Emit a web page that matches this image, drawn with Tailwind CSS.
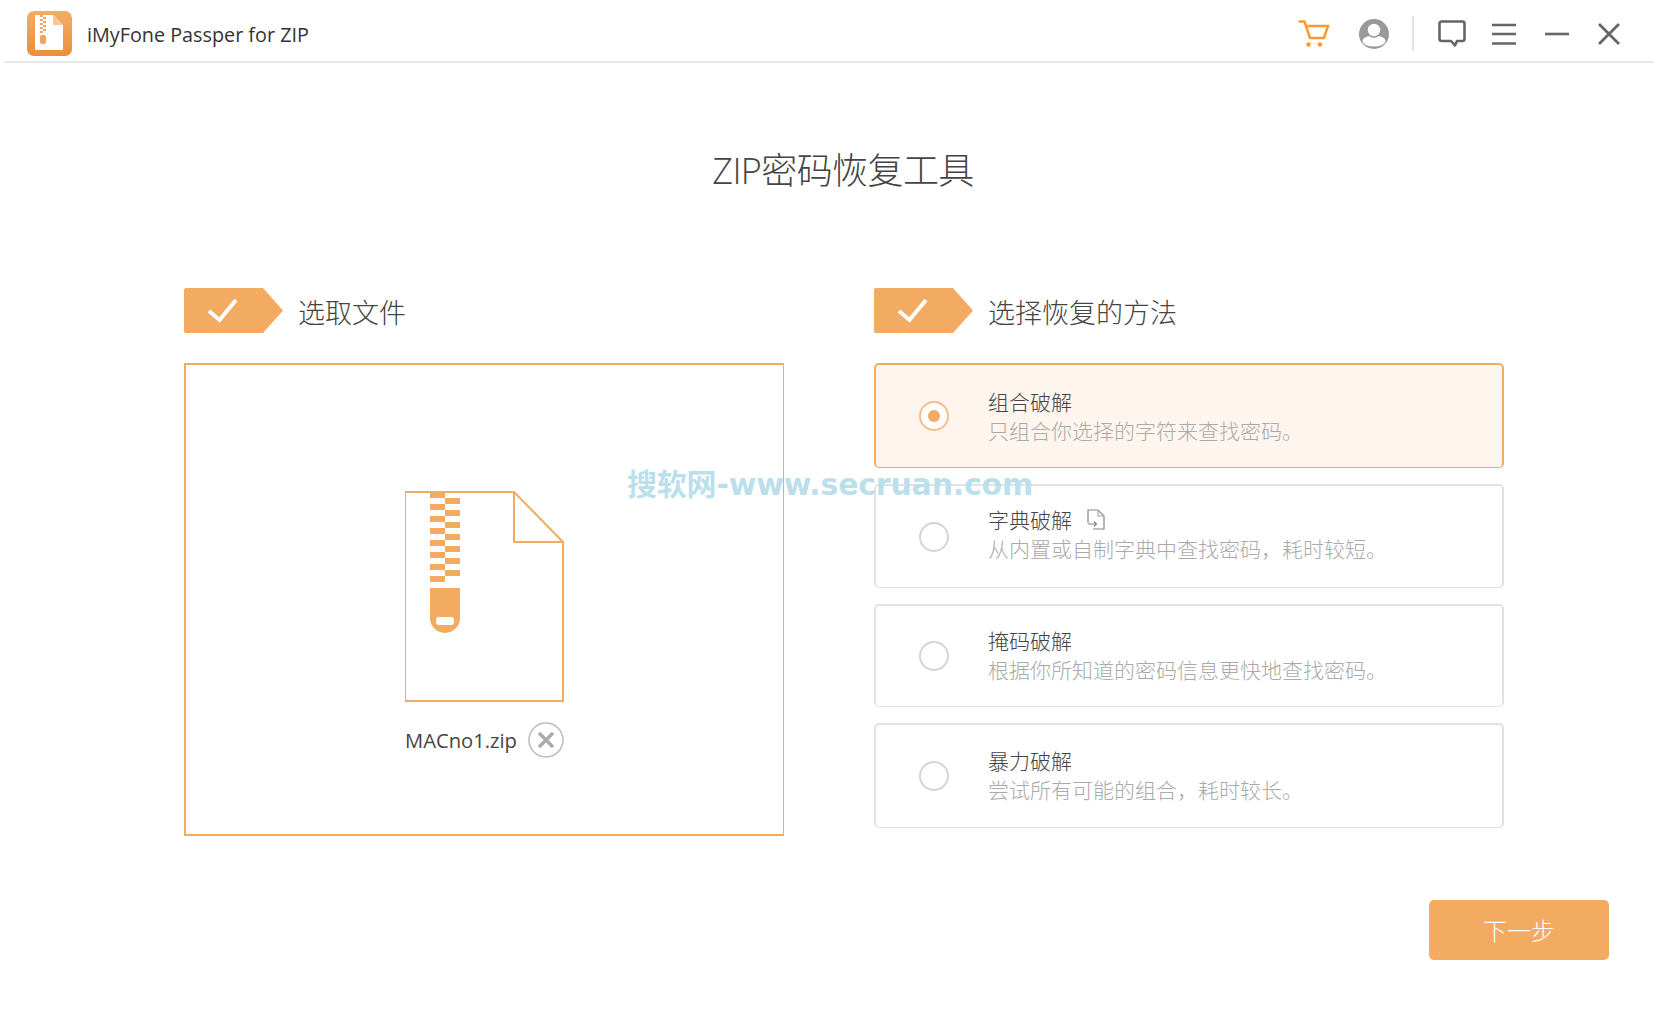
<!DOCTYPE html>
<html lang="zh-CN">
<head>
  <meta charset="UTF-8">
  <title>iMyFone Passper for ZIP</title>
  <script src="https://cdn.jsdelivr.net/npm/@tailwindcss/browser@4"></script>
</head>
<body class="bg-white">
  <div class="relative w-[1658px] h-[1015px] overflow-hidden bg-white text-[#333] font-['Open_Sans','Noto_Sans_CJK_SC',sans-serif]">

    <!-- title bar -->
    <header class="mx-[4px] h-[63px] border-b-2 border-[#e8e8e8] flex items-center pl-[23px] pt-[6px]">
      <svg class="w-[45px] h-[45px] shrink-0" viewBox="0 0 45 45">
        <defs>
          <linearGradient id="logoBg" x1="0" y1="0" x2="0" y2="1">
            <stop offset="0" stop-color="#f2ad68"/>
            <stop offset="1" stop-color="#e98f3c"/>
          </linearGradient>
        </defs>
        <rect width="45" height="45" rx="7" fill="url(#logoBg)"/>
        <path d="M8 4H26L36 14V39H8Z" fill="#fff"/>
        <path d="M26 4V14H36Z" fill="#f6c798"/>
        <path d="M13 4h3v2h-3zM16 6h3v2h-3zM13 8h3v2h-3zM16 10h3v2h-3zM13 12h3v2h-3zM16 14h3v2h-3zM13 16h3v2h-3zM16 18h3v2h-3zM13 20h3v2h-3z" fill="#eea55f"/>
        <rect x="13" y="24" width="6" height="9" rx="2" fill="#eea55f"/>
      </svg>
      <span class="ml-[15px] pt-[2px] text-[19.8px] text-[#333]">iMyFone Passper for ZIP</span>

      <div class="ml-auto flex items-center h-full">
        <svg class="w-[32px] h-[30px]" viewBox="0 0 32 30" fill="none" stroke="#ff9a2e" stroke-width="2.5">
          <path d="M0.5 2.5H6.5L12 19H26L30 7H8.5"/>
          <circle cx="10.5" cy="25.5" r="2.2" fill="#ff9a2e" stroke="none"/>
          <circle cx="22" cy="25.5" r="2.2" fill="#ff9a2e" stroke="none"/>
        </svg>
        <svg class="ml-[29px] w-[30px] h-[30px]" viewBox="0 0 30 30">
          <circle cx="15" cy="15" r="15" fill="#999"/>
          <ellipse cx="15" cy="22" rx="11.5" ry="5.5" fill="#fff"/>
          <circle cx="15" cy="11" r="7" fill="#fff" stroke="#999" stroke-width="1.5"/>
        </svg>
        <div class="ml-[23px] w-[2px] h-[35px] bg-[#e2e2e2]"></div>
        <svg class="ml-[24px] w-[28px] h-[28px]" viewBox="0 0 28 28" fill="none" stroke="#666" stroke-width="2.6" stroke-linejoin="round">
          <path d="M3.5 1.5H24.5A2 2 0 0 1 26.5 3.5V19A2 2 0 0 1 24.5 21H19L17 25.5L13 21H3.5A2 2 0 0 1 1.5 19V3.5A2 2 0 0 1 3.5 1.5Z"/>
        </svg>
        <svg class="ml-[26px] w-[24px] h-[22px]" viewBox="0 0 24 22" stroke="#666" stroke-width="2.6">
          <path d="M0 2H24M0 11H24M0 20.5H24"/>
        </svg>
        <svg class="ml-[29px] w-[24px] h-[4px]" viewBox="0 0 24 4" stroke="#666" stroke-width="2.6">
          <path d="M0 2H24"/>
        </svg>
        <svg class="ml-[29px] mr-[34px] w-[22px] h-[22px]" viewBox="0 0 22 22" stroke="#666" stroke-width="2.8">
          <path d="M1 1L21 21M21 1L1 21"/>
        </svg>
      </div>
    </header>

    <h1 class="mt-[81px] pl-[28px] text-center text-[36px] leading-[54px] font-light tracking-[-0.6px] text-[#444]">ZIP密码恢复工具</h1>

    <main class="mt-[90px] ml-[184px] flex gap-[90px]">
      <!-- step 1 -->
      <section class="w-[600px]">
        <div class="flex items-center h-[45px] gap-[15px]">
          <svg class="w-[99px] h-[45px]" viewBox="0 0 99 45">
            <path d="M2 0H79L99 22.5L79 45H2A2 2 0 0 1 0 43V2A2 2 0 0 1 2 0Z" fill="#f3ab62"/>
            <path d="M25 23L35.5 32L52 12" fill="none" stroke="#fff" stroke-width="4"/>
          </svg>
          <span class="pt-[6px] text-[27px] font-light text-[#444]">选取文件</span>
        </div>

        <div class="mt-[30px] h-[473px] border-2 border-r border-[#f3ab62] flex flex-col items-center pt-[126px]">
          <svg class="w-[159px] h-[211px]" viewBox="1 0 159 211">
            <path d="M1 1H110L159 51V210H1Z" fill="#fff" stroke="#f3ab62" stroke-width="2"/>
            <path d="M110 1V51H159" fill="none" stroke="#f3ab62" stroke-width="2"/>
            <path d="M26 0h15v7h-15zM41 7h15v6h-15zM26 13h15v6h-15zM41 19h15v6h-15zM26 25h15v6h-15zM41 31h15v6h-15zM26 37h15v6h-15zM41 43h15v6h-15zM26 49h15v6h-15zM41 55h15v6h-15zM26 61h15v6h-15zM41 67h15v6h-15zM26 73h15v6h-15zM41 79h15v6h-15zM26 85h15v6h-15z" fill="#f3ab62"/>
            <path d="M26 97H56V127A15 15 0 0 1 41 142A15 15 0 0 1 26 127Z" fill="#f3ab62"/>
            <rect x="32" y="126" width="18" height="8" rx="3" fill="#fff"/>
          </svg>
          <div class="mt-[20px] flex items-center gap-[11px]">
            <span class="text-[20.2px] text-[#444]">MACno1.zip</span>
            <svg class="w-[36px] h-[36px]" viewBox="0 0 36 36" fill="none">
              <circle cx="18" cy="18" r="17" stroke="#bbb" stroke-width="1.5"/>
              <path d="M11 11L25 25M25 11L11 25" stroke="#aaa" stroke-width="3.2"/>
            </svg>
          </div>
        </div>
      </section>

      <!-- step 2 -->
      <section class="w-[630px]">
        <div class="flex items-center h-[45px] gap-[15px]">
          <svg class="w-[99px] h-[45px]" viewBox="0 0 99 45">
            <path d="M2 0H79L99 22.5L79 45H2A2 2 0 0 1 0 43V2A2 2 0 0 1 2 0Z" fill="#f3ab62"/>
            <path d="M25 23L35.5 32L52 12" fill="none" stroke="#fff" stroke-width="4"/>
          </svg>
          <span class="pt-[6px] text-[27px] font-light text-[#444]">选择恢复的方法</span>
        </div>

        <div class="mt-[30px] flex flex-col gap-[16px]">
          <div class="h-[105px] rounded-[5px] border-2 border-b border-[#f3ab62] bg-[#fef5ef] flex items-center pl-[43px]">
            <span class="w-[30px] h-[30px] rounded-full border-2 border-[#f6bd85] bg-white flex items-center justify-center">
              <span class="w-[12px] h-[12px] rounded-full bg-[#f3ab62]"></span>
            </span>
            <div class="ml-[39px] pt-[2px] font-light">
              <div class="text-[21px] leading-[29px] text-[#444]">组合破解</div>
              <div class="text-[21px] leading-[29px] text-[#aaa]">只组合你选择的字符来查找密码。</div>
            </div>
          </div>

          <div class="h-[104px] rounded-[5px] border-2 border-b border-[#e2e2e2] flex items-center pl-[43px]">
            <span class="w-[30px] h-[30px] rounded-full border-2 border-[#d4d4d4] bg-white"></span>
            <div class="ml-[39px] pb-[3px] font-light">
              <div class="flex items-center text-[21px] leading-[29px] text-[#444]">字典破解
                <svg class="ml-[15px] mb-[2px] w-[18px] h-[21px]" viewBox="0 0 18 21" fill="none" stroke="#888" stroke-width="1.2">
                  <path d="M1 14V1H11L17 7V20H6"/>
                  <path d="M11 1V7H17" stroke="#aaa"/>
                  <path d="M1 15H9M7 12.5L9.5 15L7 17.5"/>
                </svg>
              </div>
              <div class="text-[21px] leading-[29px] text-[#aaa]">从内置或自制字典中查找密码，耗时较短。</div>
            </div>
          </div>

          <div class="h-[103px] rounded-[5px] border-2 border-b border-[#e2e2e2] flex items-center pl-[43px]">
            <span class="w-[30px] h-[30px] rounded-full border-2 border-[#d4d4d4] bg-white"></span>
            <div class="ml-[39px] font-light">
              <div class="text-[21px] leading-[29px] text-[#444]">掩码破解</div>
              <div class="text-[21px] leading-[29px] text-[#aaa]">根据你所知道的密码信息更快地查找密码。</div>
            </div>
          </div>

          <div class="h-[105px] rounded-[5px] border-2 border-b border-[#e2e2e2] flex items-center pl-[43px]">
            <span class="w-[30px] h-[30px] rounded-full border-2 border-[#d4d4d4] bg-white"></span>
            <div class="ml-[39px] font-light">
              <div class="text-[21px] leading-[29px] text-[#444]">暴力破解</div>
              <div class="text-[21px] leading-[29px] text-[#aaa]">尝试所有可能的组合，耗时较长。</div>
            </div>
          </div>
        </div>
      </section>
    </main>

    <div class="mt-[64px] pr-[49px] flex justify-end">
      <button class="w-[180px] h-[60px] pt-[2px] rounded-[5px] bg-[#f3ab62] text-white text-[24px] font-light">下一步</button>
    </div>

    <!-- watermark over the page -->
    <div class="absolute left-[627px] top-[467px] text-[30px] leading-[36px] font-bold tracking-[-0.2px] text-[#bcdfec] whitespace-nowrap font-['DejaVu_Sans','Noto_Sans_CJK_SC',sans-serif]">搜软网-www.secruan.com</div>
  </div>
</body>
</html>
